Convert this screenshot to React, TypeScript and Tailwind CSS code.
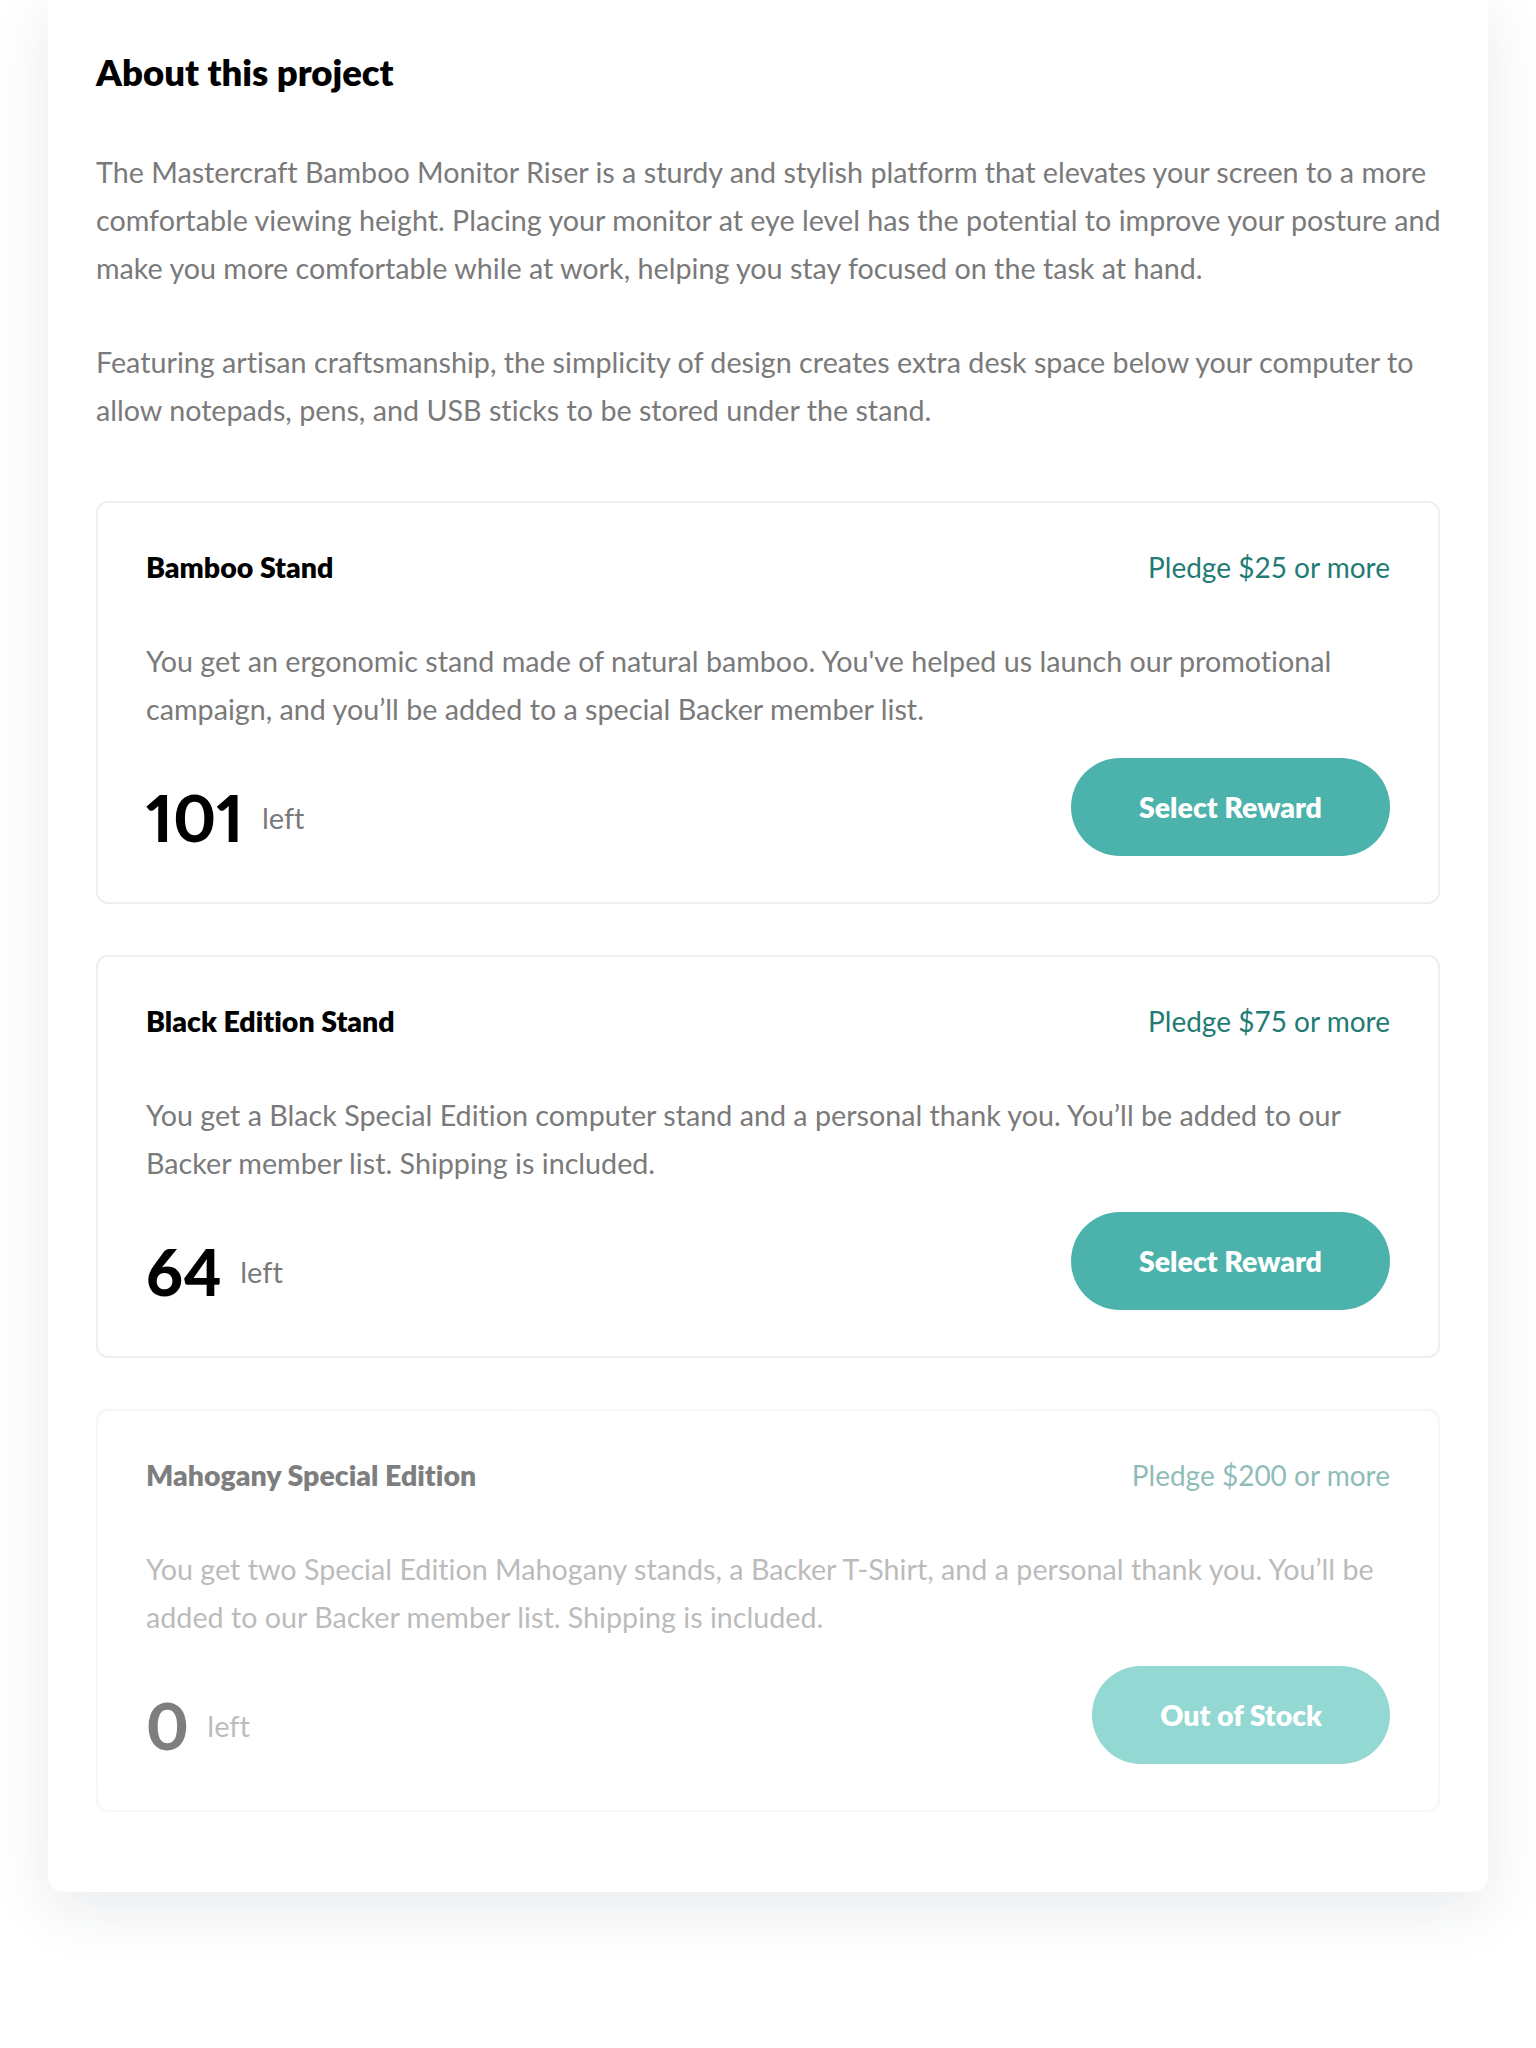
import React from "react";

type Reward = {
  name: string;
  pledge: string;
  desc: string;
  left: number;
  out?: boolean;
};

const rewards: Reward[] = [
  {
    name: "Bamboo Stand",
    pledge: "Pledge $25 or more",
    desc: "You get an ergonomic stand made of natural bamboo. You've helped us launch our promotional campaign, and you’ll be added to a special Backer member list.",
    left: 101,
  },
  {
    name: "Black Edition Stand",
    pledge: "Pledge $75 or more",
    desc: "You get a Black Special Edition computer stand and a personal thank you. You’ll be added to our Backer member list. Shipping is included.",
    left: 64,
  },
  {
    name: "Mahogany Special Edition",
    pledge: "Pledge $200 or more",
    desc: "You get two Special Edition Mahogany stands, a Backer T-Shirt, and a personal thank you. You’ll be added to our Backer member list. Shipping is included.",
    left: 0,
    out: true,
  },
];

function RewardCard({ r, first }: { r: Reward; first: boolean }) {
  return (
    <div
      className={`${first ? "mt-[67px]" : "mt-[51px]"} ${
        r.out ? "opacity-50" : ""
      } rounded-[12px] border-2 border-[#efefef] px-[48px] pt-[46px] pb-[46px]`}
    >
      <div className="flex items-baseline justify-between">
        <h3 className="text-[28.5px] leading-[36px] font-extrabold text-black">{r.name}</h3>
        <span className="text-[28px] leading-[36px] text-[#1f7b73]">{r.pledge}</span>
      </div>
      <p className="mt-[52px] mr-[-8px] text-[28.7px] leading-[48px] text-[#7a7a7a]">{r.desc}</p>
      <div className="mt-[25px] flex items-end justify-between">
        <div className="flex items-center gap-[18px]">
          <span className="text-[64px] leading-[77px] font-black tracking-[0.5px] text-black proportional-nums">
            {r.left}
          </span>
          <span className="text-[29px] leading-[36px] text-[#7a7a7a]">left</span>
        </div>
        <button
          className={`h-[98px] rounded-full px-[68px] text-[28.5px] font-extrabold text-white ${
            r.out ? "bg-[#29b3a9]" : "bg-[#4bb3ab]"
          }`}
        >
          {r.out ? "Out of Stock" : "Select Reward"}
        </button>
      </div>
    </div>
  );
}

export default function App() {
  return (
    <div className="min-h-[2048px] bg-white font-['Lato',sans-serif] [font-variant-ligatures:no-common-ligatures]">
      <div className="px-[48px]">
        <div className="rounded-b-[16px] bg-white px-[48px] pt-[50px] pb-[80px] shadow-[0_16px_60px_rgba(30,45,70,0.10)]">
          <h2 className="text-[36.5px] leading-[44px] font-extrabold text-black">About this project</h2>
          <p className="mt-[54px] mr-[-12px] text-[28.7px] leading-[48px] text-[#7a7a7a]">
            The Mastercraft Bamboo Monitor Riser is a sturdy and stylish platform that elevates your
            screen to a more comfortable viewing height. Placing your monitor at eye level has the
            potential to improve your posture and make you more comfortable while at work, helping
            you stay focused on the task at hand.
          </p>
          <p className="mt-[46px] mr-[-12px] text-[28.7px] leading-[48px] text-[#7a7a7a]">
            Featuring artisan craftsmanship, the simplicity of design creates extra desk space below
            your computer to allow notepads, pens, and USB sticks to be stored under the stand.
          </p>
          {rewards.map((r, i) => (
            <RewardCard key={r.name} r={r} first={i === 0} />
          ))}
        </div>
      </div>
    </div>
  );
}
